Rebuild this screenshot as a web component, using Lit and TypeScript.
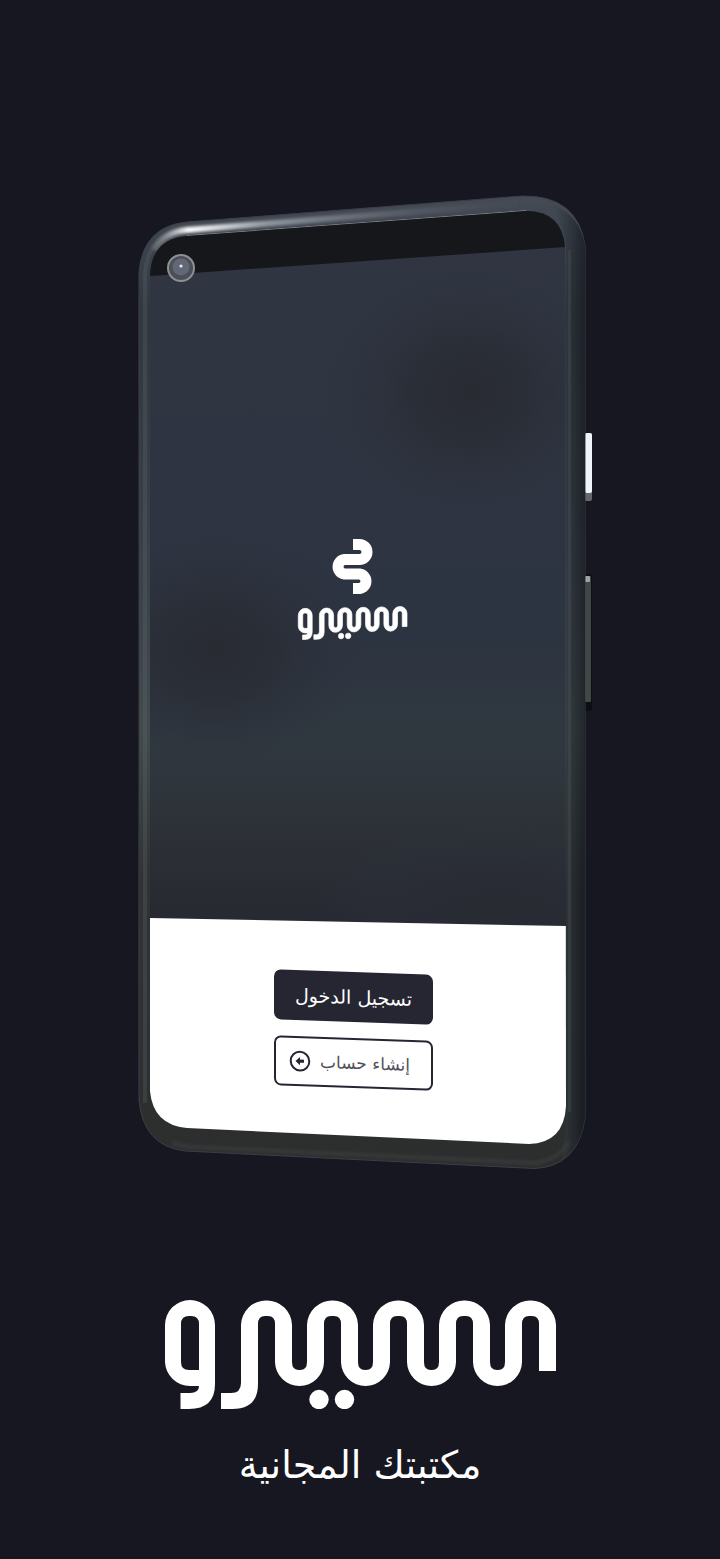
import { LitElement, html, svg, css } from "lit";
import { customElement } from "lit/decorators.js";

/* Outline of the wave that joins the letters of the wordmark (box 392 x 109). */
function wavePath(): string {
  const first = 86;
  const pitch = 33;
  const half = 8;
  const arches = 5;
  const x = (i: number) => first + i * pitch;
  let d = `M57 93H67Q77 93 77 83V25`;
  for (let a = 0; a < arches; a++) {
    const l = x(a * 2) - half - 1;
    const r = x(a * 2 + 1) + half + 1;
    d += `V25A25 25 0 0 1 ${(l + r) / 2} 0.5A25 25 0 0 1 ${r} 25`;
    if (a < arches - 1) {
      const n = x(a * 2 + 2) - half - 1;
      d += `V62Q${r} 70 ${r + 7} 70H${n - 7}Q${n} 70 ${n} 62`;
    }
  }
  d += `V71`;
  for (let a = arches - 1; a >= 0; a--) {
    const r = x(a * 2 + 1) - half;
    const l = x(a * 2) + half;
    d += `H${r}V24Q${r} 16 ${r - 7} 16H${l + 7}Q${l} 16 ${l} 24`;
    if (a > 0) {
      const p = x(a * 2 - 1) - half;
      d += `V62A24.5 24.5 0 0 1 ${(l + p) / 2} 86A24.5 24.5 0 0 1 ${p} 62`;
    }
  }
  d += `V84Q94 109 68 109H57Z`;
  return d;
}

const wordmark = svg`
  <path fill-rule="evenodd" d="M1 25A25 25 0 0 1 51 25V84Q51 109 25 109H16.5V93H26Q35 93 35 86H26A25 25 0 0 1 1 62Z
    M17 24V62Q17 70 25 70H35V24Q35 16 27 16H25Q17 16 17 24Z"></path>
  <path d=${wavePath()}></path>
  <circle cx="155" cy="99.500" r="9.700"></circle>
  <circle cx="180.500" cy="99.500" r="9.700"></circle>`;

@customElement("siro-wordmark")
class SiroWordmark extends LitElement {
  static styles = css`
    :host { display: block; }
    svg { display: block; width: 100%; fill: #fff; }
  `;
  render() {
    return html`<svg viewBox="0 0 392 109" role="img" aria-label="سيرو">${wordmark}</svg>`;
  }
}

@customElement("phone-mockup")
class PhoneMockup extends LitElement {
  static styles = css`
    :host { display: grid; }
    .device, .panel { grid-area: 1 / 1; }
    .device { display: block; width: 100%; }
    .panel {
      position: relative;
      align-self: end;
      display: flex;
      flex-direction: column;
      align-items: center;
      gap: 16px;
      padding: 0 14px 82px 0;
    }
    button {
      box-sizing: border-box;
      display: flex;
      align-items: center;
      justify-content: center;
      width: 159px;
      height: 50px;
      padding: 0;
      border: 2px solid #252631;
      border-radius: 7px;
      font: 19px/28px "DejaVu Sans", sans-serif;
      cursor: pointer;
      transform: skewY(2deg);
    }
    .login { background: #252631; color: #fff; }
    .create { gap: 9px; padding-inline-start: 8px; background: #fff; color: #50505a; font-size: 17px; }
    .create svg { width: 22px; height: 22px; }
  `;

  render() {
    return html`
      <svg class="device" viewBox="128 195 464 975" aria-hidden="true">
        <defs>
          <linearGradient id="side" x1="0" y1="0" x2="0" y2="1">
            <stop offset="0" stop-color="#454a55"></stop>
            <stop offset=".12" stop-color="#30383f"></stop>
            <stop offset=".4" stop-color="#3b424a"></stop>
            <stop offset=".55" stop-color="#424b4c"></stop>
            <stop offset=".7" stop-color="#303334"></stop>
            <stop offset="1" stop-color="#2c2e2e"></stop>
          </linearGradient>
          <linearGradient id="right" x1="0" y1="0" x2="1" y2="0">
            <stop offset="0" stop-color="#434c55" stop-opacity=".6"></stop>
            <stop offset=".5" stop-color="#2b3238"></stop>
            <stop offset=".85" stop-color="#15191e"></stop>
            <stop offset="1" stop-color="#0b1117"></stop>
          </linearGradient>
          <linearGradient id="shine" gradientUnits="userSpaceOnUse" x1="150" y1="0" x2="535" y2="0">
            <stop offset="0" stop-color="#858b92" stop-opacity=".3"></stop>
            <stop offset=".1" stop-color="#ffffff"></stop>
            <stop offset=".3" stop-color="#9298a1"></stop>
            <stop offset="1" stop-color="#4a4f5a" stop-opacity="0"></stop>
          </linearGradient>
          <linearGradient id="wall" x1="0" y1="0" x2="0" y2="1">
            <stop offset="0" stop-color="#303541"></stop>
            <stop offset=".6" stop-color="#2d3441"></stop>
            <stop offset=".75" stop-color="#30383f"></stop>
            <stop offset=".88" stop-color="#2c3036"></stop>
            <stop offset="1" stop-color="#272831"></stop>
          </linearGradient>
          <radialGradient id="shade">
            <stop offset="0" stop-color="#282b32"></stop>
            <stop offset=".4" stop-color="#292c34" stop-opacity=".75"></stop>
            <stop offset="1" stop-color="#2c323e" stop-opacity="0"></stop>
          </radialGradient>
          <clipPath id="screen">
            <path d="M150 276Q151 239 187 236L526 211Q562 211 565 247L566 1106Q564 1143 529 1144L187 1128Q153 1125 150 1091Z"></path>
          </clipPath>
          <filter id="soft" filterUnits="userSpaceOnUse" x="128" y="190" width="464" height="990"><feGaussianBlur stdDeviation="1.500"></feGaussianBlur></filter>
        </defs>

        <rect x="584" y="433" width="8" height="68" rx="2" fill="#626770"></rect>
        <rect x="585" y="433" width="7" height="60" rx="2" fill="#f1f3fb"></rect>
        <rect x="584" y="574" width="8" height="137" rx="2" fill="#0b0e12"></rect>
        <rect x="585" y="576" width="6" height="126" rx="1" fill="#424746"></rect>
        <rect x="585" y="576" width="5" height="6" rx="1" fill="#a0a3a6"></rect>

        <path fill="url(#side)" stroke="#3a4047" d="M139 272Q143 226 187 222L522 196Q578 195 585 246V1118Q578 1167 534 1168.500L185 1151Q143 1146 139 1100Z"></path>
        <path fill="url(#right)" opacity=".6" d="M566 246Q563 220 550 204Q580 214 585 246V1118Q581 1147 562 1160Q566 1135 566 1106Z"></path>
        <path d="M569.500 250V1112" stroke="#4b555a" stroke-opacity=".35" stroke-width="3"></path>
        <path d="M145 1103V273Q149 231 189 228" fill="none" stroke="#5d676d" stroke-opacity=".3" stroke-width="4"></path>
        <path d="M154 250Q164 232 187 230L524 203" fill="none" stroke="url(#shine)" stroke-width="6" filter="url(#soft)"></path>
        <path d="M172 1143L190 1147L535 1163Q558 1160 569 1142" fill="none" stroke="#454749" stroke-opacity=".4" stroke-width="4" filter="url(#soft)"></path>
        <path d="M187 236L526 211" stroke="#a7aaa8" stroke-width="1.500" stroke-opacity=".7"></path>

        <g clip-path="url(#screen)">
          <path d="M150 200H566V930H150Z" fill="url(#wall)"></path>
          <ellipse cx="470" cy="392" rx="145" ry="125" fill="url(#shade)"></ellipse>
          <ellipse cx="215" cy="650" rx="150" ry="120" fill="url(#shade)"></ellipse>
          <ellipse cx="500" cy="905" rx="180" ry="85" fill="url(#shade)"></ellipse>
          <path d="M150 200H566V247L150 276Z" fill="#15171a"></path>
          <path d="M150 918L566 926V1150H150Z" fill="#fff"></path>
        </g>

        <circle cx="181" cy="268" r="13" fill="#4b4f58" stroke="#8f8f94" stroke-width="2"></circle>
        <circle cx="181" cy="267" r="8.500" fill="#626875"></circle>
        <circle cx="181" cy="266" r="1.600" fill="#e3e7ef"></circle>

        <path fill="none" stroke="#fff" stroke-width="11" d="M353 544.500H359.500A7.500 7.500 0 0 1 359.500 559.500H344.500A7.300 7.300 0 0 0 344.500 574H359.500A7.300 7.300 0 0 1 359.500 588.500H353"></path>
        <g fill="#fff" stroke="#fff" stroke-width="2.500" transform="translate(298 608.500) skewY(-1.200) scale(.278 .286)">${wordmark}</g>
      </svg>
      <div class="panel">
        <button class="login">تسجيل الدخول</button>
        <button class="create">
          <span>إنشاء حساب</span>
          <svg viewBox="0 0 22 22" aria-hidden="true">
            <circle cx="11" cy="11" r="9.300" fill="none" stroke="#252631" stroke-width="2"></circle>
            <path d="M6.500 11L11 6.800V9.400H15V12.600H11V15.200Z" fill="#252631"></path>
          </svg>
        </button>
      </div>`;
  }
}

@customElement("app-root")
class AppRoot extends LitElement {
  static styles = css`
    :host {
      display: block;
      min-height: 100vh;
      background: #161720;
      color: #fff;
      font-family: "DejaVu Sans", sans-serif;
    }
    main {
      display: flex;
      flex-direction: column;
      align-items: center;
      padding: 195px 24px 64px;
    }
    phone-mockup { width: 100%; max-width: 464px; }
    siro-wordmark { width: 84%; max-width: 392px; margin-top: 130px; }
    p { margin: 28px 0 0; font-size: 38px; line-height: 56px; text-align: center; }
  `;

  render() {
    return html`
      <main dir="rtl" lang="ar">
        <phone-mockup></phone-mockup>
        <siro-wordmark></siro-wordmark>
        <p>مكتبتك المجانية</p>
      </main>`;
  }
}
